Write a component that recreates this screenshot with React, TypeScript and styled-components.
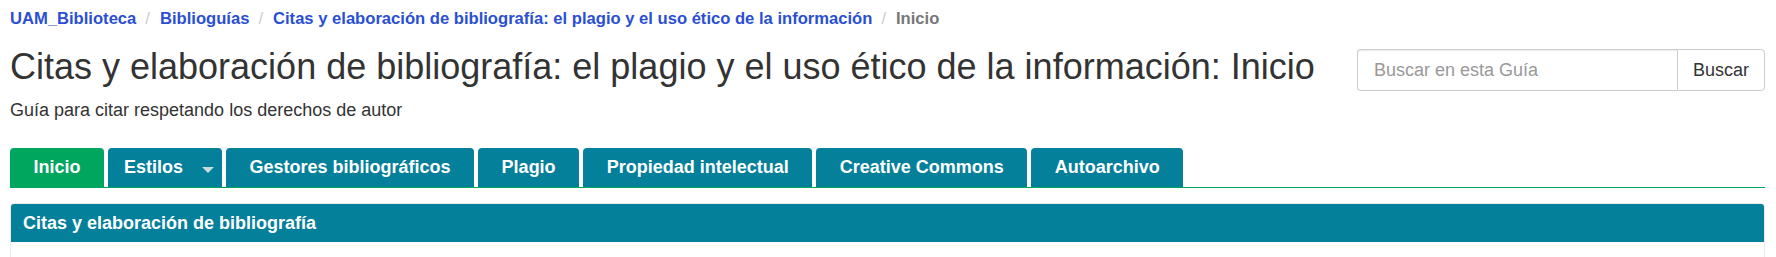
import styled, { createGlobalStyle } from 'styled-components';

const GlobalStyle = createGlobalStyle`
  html, body {
    margin: 0;
    padding: 0;
    background: #fff;
  }
  body {
    font-family: "Liberation Sans", Arial, sans-serif;
    color: #333;
  }
`;

const TEAL = '#04809a';
const GREEN = '#00a65e';
const LINK = '#2a4fd2';

const tabs = [
  { label: 'Inicio', active: true },
  { label: 'Estilos', dropdown: true },
  { label: 'Gestores bibliográficos' },
  { label: 'Plagio' },
  { label: 'Propiedad intelectual' },
  { label: 'Creative Commons' },
  { label: 'Autoarchivo' }
];

const Page = styled.div`
  padding: 0 11px 0 10px;
`;

const Breadcrumb = styled.ol`
  display: flex;
  list-style: none;
  margin: 0;
  padding: 9px 0 0;
  line-height: 20px;
  font-size: 16.6px;
  font-weight: 700;
`;

const Crumb = styled.li`
  color: #777;

  & + &::before {
    content: '/';
    color: #ccc;
    font-weight: 400;
    padding: 0 10px 0 9px;
  }

  a {
    color: ${LINK};
    text-decoration: none;
  }
`;

const HeaderRow = styled.div`
  display: flex;
  justify-content: space-between;
  align-items: flex-start;
  margin-top: 18px;
`;

const Title = styled.h1`
  margin: 0;
  font-size: 36px;
  font-weight: 400;
  line-height: 40px;
  color: #333;
`;

const Subtitle = styled.div`
  margin-top: 12px;
  font-size: 18px;
  line-height: 22px;
  color: #333;
`;

const SearchGroup = styled.form`
  display: flex;
  width: 408px;
  height: 42px;
  margin: 2px 0 0;
`;

const SearchInput = styled.input`
  flex: 1;
  min-width: 0;
  box-sizing: border-box;
  height: 100%;
  border: 1px solid #ccc;
  border-right: none;
  border-radius: 4px 0 0 4px;
  padding: 0 16px;
  font-family: inherit;
  font-size: 18px;
  color: #555;
  box-shadow: inset 0 1px 1px rgba(0, 0, 0, 0.075);

  &::placeholder {
    color: #999;
  }
`;

const SearchButton = styled.button`
  box-sizing: border-box;
  height: 100%;
  width: 88px;
  border: 1px solid #ccc;
  border-radius: 0 4px 4px 0;
  background: #fff;
  font-family: inherit;
  font-size: 18px;
  color: #333;
`;

const TabBar = styled.ul`
  display: flex;
  gap: 4px;
  list-style: none;
  margin: 27px 0 0;
  padding: 0;
  border-bottom: 1px solid ${GREEN};
`;

const Tab = styled.li<{ $active?: boolean; $dropdown?: boolean }>`
  display: flex;
  align-items: center;
  height: 39px;
  padding: ${({ $dropdown }) => ($dropdown ? '0 8px 0 16px' : '0 23.5px')};
  border-radius: 4px 4px 0 0;
  background: ${({ $active }) => ($active ? GREEN : TEAL)};
  color: #fff;
  font-size: 18px;
  font-weight: 700;
`;

const Caret = styled.span`
  display: inline-block;
  margin-left: 19px;
  width: 0;
  height: 0;
  border-left: 6px solid transparent;
  border-right: 6px solid transparent;
  border-top: 6px solid #c9d9de;
  transform: translateY(2px);
`;

const Panel = styled.div`
  margin-top: 15px;
  border: 1px solid #efe7e8;
  border-radius: 4px;
  height: 60px;
`;

const PanelHeading = styled.div`
  display: flex;
  align-items: center;
  height: 38px;
  padding: 0 12px;
  background: ${TEAL};
  border-radius: 3px 3px 0 0;
  color: #fff;
  font-size: 18px;
  font-weight: 700;
`;

export default function App() {
  return (
    <>
      <GlobalStyle />
      <Page>
        <Breadcrumb>
          <Crumb><a href="#">UAM_Biblioteca</a></Crumb>
          <Crumb><a href="#">Biblioguías</a></Crumb>
          <Crumb><a href="#">Citas y elaboración de bibliografía: el plagio y el uso ético de la información</a></Crumb>
          <Crumb>Inicio</Crumb>
        </Breadcrumb>

        <HeaderRow>
          <div>
            <Title>Citas y elaboración de bibliografía: el plagio y el uso ético de la información: Inicio</Title>
            <Subtitle>Guía para citar respetando los derechos de autor</Subtitle>
          </div>
          <SearchGroup onSubmit={(e) => e.preventDefault()}>
            <SearchInput placeholder="Buscar en esta Guía" />
            <SearchButton type="submit">Buscar</SearchButton>
          </SearchGroup>
        </HeaderRow>

        <TabBar>
          {tabs.map((t) => (
            <Tab key={t.label} $active={t.active} $dropdown={t.dropdown}>
              {t.label}
              {t.dropdown ? <Caret /> : null}
            </Tab>
          ))}
        </TabBar>

        <Panel>
          <PanelHeading>Citas y elaboración de bibliografía</PanelHeading>
        </Panel>
      </Page>
    </>
  );
}
